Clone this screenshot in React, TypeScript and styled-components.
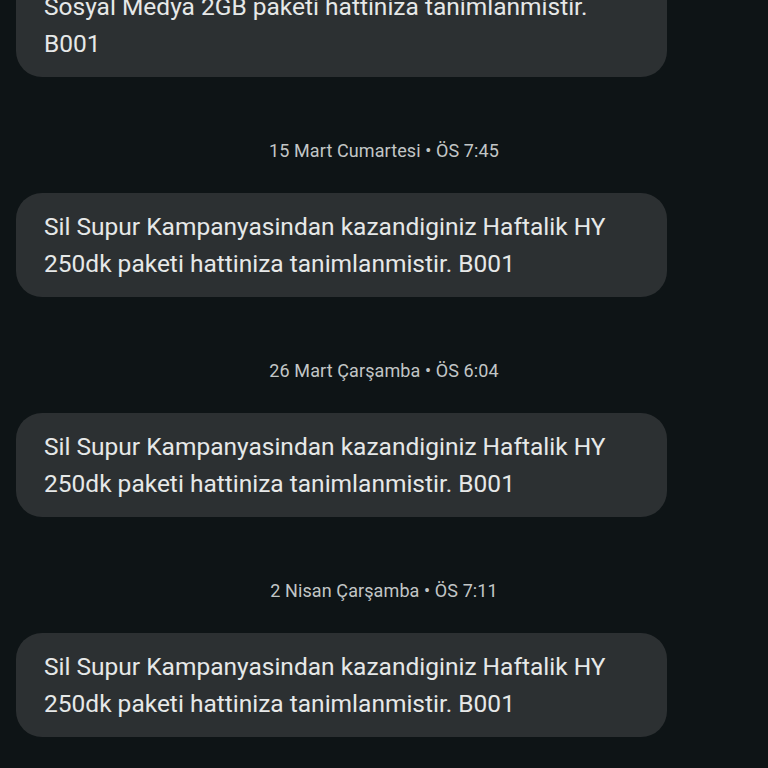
import styled, { createGlobalStyle } from 'styled-components';

const GlobalStyle = createGlobalStyle`
  html, body {
    margin: 0;
    padding: 0;
    background: #0e1416;
    height: 100%;
    overflow: hidden;
  }
`;

const Thread = styled.main`
  display: flex;
  flex-direction: column;
  padding: 0 16px;
  margin-top: -64px;
  font-family: Roboto, 'Noto Sans', sans-serif;
`;

const Bubble = styled.div`
  box-sizing: border-box;
  width: 651px;
  padding: 15px 28px;
  border-radius: 26px;
  background: #2c3032;
  color: #e6e8e8;
  font-size: 24.5px;
  line-height: 37px;
`;

const Stamp = styled.div`
  height: 116px;
  display: flex;
  align-items: center;
  justify-content: center;
  padding-top: 30px;
  box-sizing: border-box;
  color: #c2c6c6;
  font-size: 18px;
  letter-spacing: 0.1px;
`;

const messages = [
  {
    when: '15 Mart Cumartesi • ÖS 7:45',
    text: 'Sil Supur Kampanyasindan kazandiginiz Haftalik HY 250dk paketi hattiniza tanimlanmistir. B001',
  },
  {
    when: '26 Mart Çarşamba • ÖS 6:04',
    text: 'Sil Supur Kampanyasindan kazandiginiz Haftalik HY 250dk paketi hattiniza tanimlanmistir. B001',
  },
  {
    when: '2 Nisan Çarşamba • ÖS 7:11',
    text: 'Sil Supur Kampanyasindan kazandiginiz Haftalik HY 250dk paketi hattiniza tanimlanmistir. B001',
  },
];

const App = () => (
  <>
    <GlobalStyle />
    <Thread>
      <Bubble>
        Sil Supur Kampanyasindan kazandiginiz Haftalik
        <br />
        Sosyal Medya 2GB paketi hattiniza tanimlanmistir.
        <br />
        B001
      </Bubble>
      {messages.map((m) => (
        <div key={m.when}>
          <Stamp>{m.when}</Stamp>
          <Bubble>{m.text}</Bubble>
        </div>
      ))}
    </Thread>
  </>
);

export default App;
